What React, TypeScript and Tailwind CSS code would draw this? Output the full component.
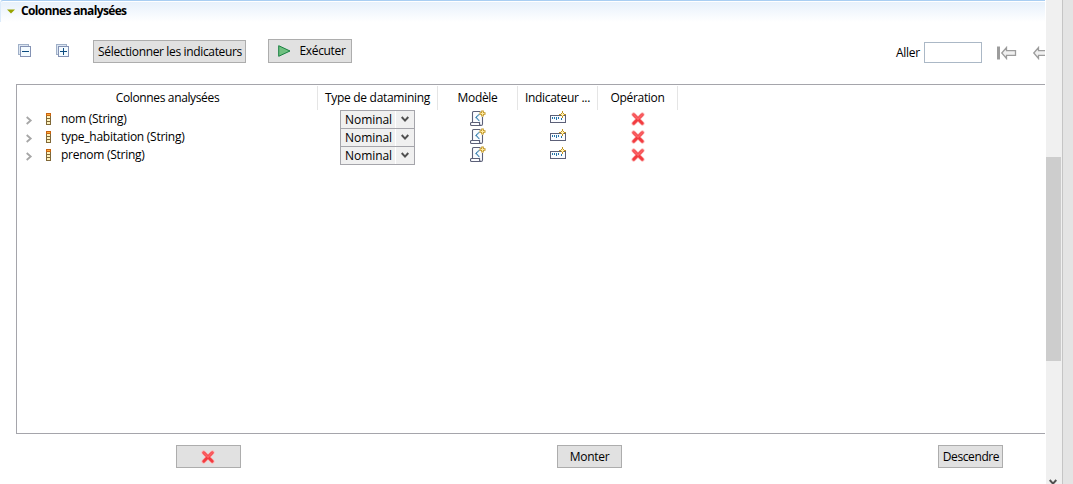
import type { ReactNode } from "react";

const rows = ["nom (String)", "type_habitation (String)", "prenom (String)"];

function Cross() {
  return (
    <svg width="14" height="14" viewBox="0 0 14 14" className="block">
      <path d="M2.6 2.6 11.4 11.4M11.4 2.6 2.6 11.4" stroke="#fbb4b4" strokeWidth="4.2" strokeLinecap="round" />
      <path d="M2.8 2.8 11.2 11.2M11.2 2.8 2.8 11.2" stroke="#f23c40" strokeWidth="3" strokeLinecap="round" />
      <path d="M2.8 2.8 7 7 11.2 2.8" stroke="#fb6467" strokeWidth="1.6" fill="none" strokeLinecap="round" />
    </svg>
  );
}

function Stack({ plus }: { plus?: boolean }) {
  return (
    <svg width="13" height="13" viewBox="0 0 13 13" shapeRendering="crispEdges" className="block">
      <rect x=".5" y=".5" width="10" height="10" fill="#dce6f2" stroke="#a0b0c8" />
      <rect x="2.5" y="2.5" width="10" height="10" fill="#f4fbff" stroke="#8492b4" />
      <path d="M4 7.5h7" stroke="#0c4c80" />
      {plus && <path d="M7.5 4v7" stroke="#0c4c80" />}
    </svg>
  );
}

function Scroll() {
  return (
    <svg width="17" height="17" viewBox="0 0 17 17" fill="none" className="block">
      <path d="M10.5 1.5H3.5Q2.5 1.5 2.5 2.5V12.5H9.5V14.5Q9.5 15.5 11 15.5 12.5 15.5 12.5 14V7" fill="#fbfcff" stroke="#5c6078" strokeWidth="1.1" />
      <path d="M9.5 12.5H1.5Q.5 12.5 .5 14 .5 15.5 1.5 15.5H11Q9.5 15.5 9.5 14Z" fill="#fbfcff" stroke="#5c6078" strokeWidth="1.1" />
      <path d="M9.5 4 6 7.5 9.5 11" stroke="#2474a8" strokeWidth="1.2" strokeDasharray="1.2 .4" />
      <path d="M12.5 0 16 3.5 12.5 7 9 3.5Z" fill="#fff" />
      <path d="M12.5 .5v6M9.5 3.5h6" stroke="#c09420" strokeWidth="2.6" />
      <path d="M12.5 1.5v4M10.5 3.5h4" stroke="#ffe9a0" strokeWidth="1" />
    </svg>
  );
}

function Ruler() {
  return (
    <svg width="17" height="14" viewBox="0 0 17 14" shapeRendering="crispEdges" className="block">
      <rect x=".5" y="5.5" width="15" height="7" fill="#fbfcff" stroke="#5c6078" />
      <path d="M2.5 7v2M4.5 7v2M6.5 7v3M8.5 7v2M11.5 8v2" stroke="#2474a8" />
      <path d="M12.5 1v7M9 4.5h7" stroke="#c09420" />
      <path d="M11 3h3v3h-3z" fill="#c09420" />
      <path d="M12.5 3v3M11 4.5h3" stroke="#fff0b5" />
    </svg>
  );
}

function Column() {
  return (
    <svg width="5" height="12" viewBox="0 0 5 12" shapeRendering="crispEdges" className="block">
      <rect width="5" height="12" fill="#806838" />
      <rect width="5" height="3" fill="#c86410" />
      <path d="M1 1.5h3" stroke="#ffac38" />
      <path d="M1 4h3M1 7h3M1 10h3" stroke="#fff2bc" strokeWidth="2" />
    </svg>
  );
}

function Arrow({ bar }: { bar?: boolean }) {
  return (
    <svg width="20" height="14" viewBox="0 0 20 14" className="block shrink-0">
      {bar && <path d="M0 .5h3v13H0z" fill="#9c9c9c" />}
      <path d="M4.8 7 9.5 1.5V4.7H18.5V9.3H9.5V12.5Z" fill="#f0f0f0" stroke="#9c9c9c" strokeWidth="1.3" />
    </svg>
  );
}

function Chevron() {
  return (
    <svg width="8" height="7" viewBox="0 0 8 7" fill="none" className="block shrink-0">
      <path d="M.7 1 4 4.6 7.3 1" stroke="#505050" strokeWidth="2" />
    </svg>
  );
}

function Btn({ className, children }: { className: string; children: ReactNode }) {
  return (
    <button className={"flex shrink-0 items-center justify-center border border-[#adadad] bg-[#e1e1e1] " + className}>
      {children}
    </button>
  );
}

export default function App() {
  return (
    <div className="flex h-[484px] w-[1073px] overflow-hidden whitespace-nowrap bg-white font-['Open_Sans','Noto_Sans',sans-serif] text-[12px] leading-[16px] tracking-[-0.3px] text-black">
      <main className="flex w-[1045px] shrink-0 flex-col overflow-hidden">
        <header className="flex h-[22px] shrink-0 items-center rounded-tl-[3px] border-l border-t border-l-[#dcebfa] border-t-[#a9cef2] bg-linear-to-b from-[#e6f0fb] to-white pl-[6px] shadow-[inset_0_1px_0_white]">
          <svg width="8" height="5" viewBox="0 0 8 5" className="block">
            <path d="M0 .5h8L4 4.5Z" fill="#98a400" />
          </svg>
          <h2 className="ml-[6px] pb-px font-bold tracking-[-0.65px]">Colonnes analysées</h2>
        </header>

        <div className="flex h-[62px] w-[1073px] shrink-0 items-start pl-[18px]">
          <div className="mt-[22px]"><Stack /></div>
          <div className="ml-[25px] mt-[22px]"><Stack plus /></div>
          <Btn className="ml-[24px] mt-[18px] h-[23px] w-[153px] pl-px tracking-[-0.35px]">Sélectionner les indicateurs</Btn>
          <Btn className="ml-[22px] mt-[17px] h-[24px] w-[84px] gap-[9px] pl-[3px] tracking-[-0.35px]">
            <svg width="13" height="12" viewBox="0 0 13 12">
              <path d="M.7.7 12 6 .7 11.3Z" fill="#70c080" stroke="#188040" />
            </svg>
            Exécuter
          </Btn>
          <label className="ml-[544px] mt-[20px] flex items-center">
            <span className="w-[28px]">Aller</span>
            <input className="h-[21px] w-[58px] border border-[#abb8c6] bg-white" />
          </label>
          <div className="ml-[15px] mt-[24px]"><Arrow bar /></div>
          <div className="ml-[12px] mt-[24px]"><Arrow /></div>
        </div>

        <section className="ml-[16px] h-[350px] w-[1057px] shrink-0 border border-[#a5a5ab] bg-white pt-px">
          <div className="flex h-[24px] text-center leading-[24px]">
            <div className="w-[301px] border-r border-[#e5e5e5] pl-px tracking-[-0.36px]">Colonnes analysées</div>
            <div className="w-[120px] border-r border-[#e5e5e5]">Type de datamining</div>
            <div className="w-[80px] border-r border-[#e5e5e5]">Modèle</div>
            <div className="w-[80px] border-r border-[#e5e5e5]">Indicateur ...</div>
            <div className="w-[80px] border-r border-[#e5e5e5]">Opération</div>
          </div>
          {rows.map((name) => (
            <div key={name} className="flex h-[18px] items-start">
              <div className="flex h-[18px] w-[300px] items-center pl-[8px]">
                <svg width="8" height="9" viewBox="0 0 8 9" fill="none" className="mt-[3px]">
                  <path d="M1.7 1 5.7 4.5 1.7 8" stroke="#a6a6a6" strokeWidth="1.8" />
                </svg>
                <div className="ml-[13px]"><Column /></div>
                <span className="ml-[10px] tracking-[-0.26px]">{name}</span>
              </div>
              <div className="flex w-[120px] justify-center pl-px">
                <div className="flex h-[19px] w-[75px] shrink-0 items-center border border-[#a5a5ab] bg-[#f0f0f0]">
                  <span className="w-[54px] pl-[4px] tracking-[-0.05px]">Nominal</span>
                  <span className="flex h-[17px] w-[19px] items-center border-l border-white pl-[5px]"><Chevron /></span>
                </div>
              </div>
              <div className="flex w-[80px] justify-center pl-[2px]"><Scroll /></div>
              <div className="flex w-[80px] justify-center pl-[3px]"><Ruler /></div>
              <div className="flex w-[80px] justify-center pl-px pt-[2px]"><Cross /></div>
            </div>
          ))}
        </section>

        <footer className="flex w-[1073px] shrink-0 pl-[176px] pt-[11px]">
          <Btn className="h-[23px] w-[65px] pr-px"><Cross /></Btn>
          <Btn className="ml-[316px] h-[23px] w-[65px]">Monter</Btn>
          <Btn className="ml-[316px] h-[23px] w-[65px] pl-px tracking-[-0.4px]">Descendre</Btn>
        </footer>
      </main>
      <aside className="ml-px flex w-[16px] shrink-0 flex-col bg-[#f0f0f0]">
        <div className="mt-[157px] h-[204px] w-[15px] shrink-0 bg-[#cdcdcd]" />
        <div className="mt-[118px] flex shrink-0 justify-center pr-[2px]"><Chevron /></div>
      </aside>
      <div className="w-[11px] shrink-0 border-l border-[#c5c5c5] bg-[#e4e4e4]" />
    </div>
  );
}
